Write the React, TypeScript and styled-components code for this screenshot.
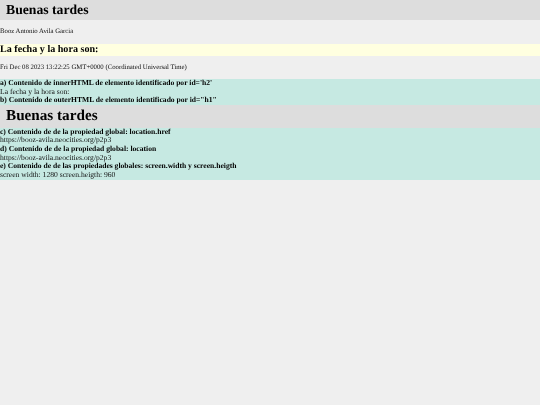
import React from "react";
import styled, { createGlobalStyle } from "styled-components";

const Global = createGlobalStyle`
  html, body { margin: 0; padding: 0; background: #efefef; }
  body { font-family: "Liberation Serif", "Times New Roman", serif; font-size: 7.6px; color: #000; text-rendering: geometricPrecision; }
`;

const Page = styled.div`
  width: 540px;
  min-height: 405px;
  background: #efefef;
  filter: blur(0.3px);
`;

const Title = styled.h1<{ $size: number; $height: number }>`
  margin: 0;
  height: ${(p) => p.$height}px;
  padding-left: 6px;
  background: #dddddd;
  font-size: ${(p) => p.$size}px;
  line-height: ${(p) => p.$height}px;
  font-weight: bold;
  color: #000;
`;

const Note = styled.p`
  margin: 0;
  height: 23.5px;
  font-size: 6.75px;
  line-height: 23.5px;
  color: #111;
`;

const Subtitle = styled.h2`
  margin: 0;
  height: 12px;
  background: #ffffe0;
  font-size: 10.1px;
  line-height: 12px;
  font-weight: bold;
  color: #000;
`;

const Panel = styled.section`
  background: #c6e9e2;
  font-size: 7.6px;
  line-height: 8.72px;
`;

const Label = styled.div`
  font-weight: bold;
  color: #000;
`;

const Value = styled.div`
  color: #111;
`;

export default function App() {
  return (
    <Page>
      <Global />
      <Title $size={13.7} $height={20}>Buenas tardes</Title>
      <Note>Booz Antonio Avila Garcia</Note>
      <Subtitle>La fecha y la hora son:</Subtitle>
      <Note>Fri Dec 08 2023 13:22:25 GMT+0000 (Coordinated Universal Time)</Note>
      <Panel>
        <Label>a) Contenido de innerHTML de elemento identificado por id='h2'</Label>
        <Value>La fecha y la hora son:</Value>
        <Label>b) Contenido de outerHTML de elemento identificado por id="h1"</Label>
      </Panel>
      <Title $size={15.2} $height={22.4}>Buenas tardes</Title>
      <Panel>
        <Label>c) Contenido de de la propiedad global: location.href</Label>
        <Value>https://booz-avila.neocities.org/p2p3</Value>
        <Label>d) Contenido de de la propiedad global: location</Label>
        <Value>https://booz-avila.neocities.org/p2p3</Value>
        <Label>e) Contenido de de las propiedades globales: screen.width y screen.heigth</Label>
        <Value>screen width: 1280 screen.heigth: 960</Value>
      </Panel>
    </Page>
  );
}
